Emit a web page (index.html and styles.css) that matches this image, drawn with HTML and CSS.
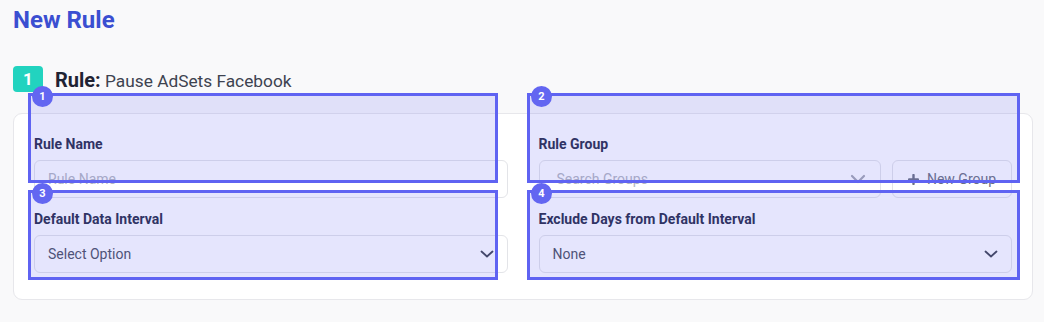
FILE: index.html
```html
<!DOCTYPE html>
<html lang="en">
<head>
<meta charset="utf-8">
<title>New Rule</title>
<link rel="stylesheet" href="styles.css">
</head>
<body>
<div class="page">
  <h1 class="title">New Rule</h1>
  <div class="step">
    <span class="step-num">1</span>
    <span class="step-title"><b>Rule:</b> Pause AdSets Facebook</span>
  </div>
  <div class="card">
    <div class="grid">
      <div class="field">
        <label class="label">Rule Name</label>
        <div class="input placeholder">Rule Name</div>
      </div>
      <div class="field">
        <label class="label">Rule Group</label>
        <div class="group-row">
          <div class="input placeholder search">
            <span>Search Groups</span>
            <svg class="chev light" width="16" height="10" viewBox="0 0 16 10"><path d="M2 2l6 6 6-6" fill="none" stroke="currentColor" stroke-width="2.2" stroke-linecap="round" stroke-linejoin="round"/></svg>
          </div>
          <div class="btn">
            <svg width="11" height="11" viewBox="0 0 11 11"><path d="M5.5 1v9M1 5.5h9" stroke="currentColor" stroke-width="2.4" stroke-linecap="round"/></svg>
            <span>New Group</span>
          </div>
        </div>
      </div>
      <div class="field">
        <label class="label">Default Data Interval</label>
        <div class="input select">
          <span>Select Option</span>
          <svg class="chev" width="14" height="8" viewBox="0 0 14 8"><path d="M1.5 1.5l5.5 5 5.5-5" fill="none" stroke="currentColor" stroke-width="1.8" stroke-linecap="round" stroke-linejoin="round"/></svg>
        </div>
      </div>
      <div class="field">
        <label class="label">Exclude Days from Default Interval</label>
        <div class="input select">
          <span>None</span>
          <svg class="chev" width="14" height="8" viewBox="0 0 14 8"><path d="M1.5 1.5l5.5 5 5.5-5" fill="none" stroke="currentColor" stroke-width="1.8" stroke-linecap="round" stroke-linejoin="round"/></svg>
        </div>
      </div>
    </div>
  </div>

  <div class="annot a1"><span class="badge">1</span></div>
  <div class="annot a2"><span class="badge">2</span></div>
  <div class="annot a3"><span class="badge">3</span></div>
  <div class="annot a4"><span class="badge">4</span></div>
</div>
</body>
</html>
```

FILE: styles.css
```css
* { box-sizing: border-box; }
html, body { margin: 0; padding: 0; }
body {
  background: #f9f9fa;
  font-family: Roboto, "Liberation Sans", sans-serif;
  color: #262a48;
}
.page {
  position: relative;
  padding: 6px 11px 0 13px;
  height: 322px;
}
.title {
  margin: 0;
  font-size: 24px;
  line-height: 28px;
  font-weight: 700;
  color: #3b4fd1;
}
.step {
  display: flex;
  align-items: center;
  gap: 12px;
  margin-top: 32px;
  height: 26px;
}
.step-num {
  width: 30px;
  height: 26px;
  border-radius: 4px;
  background: #22d3bf;
  color: #fff;
  font-weight: 700;
  font-size: 17px;
  display: flex;
  align-items: center;
  justify-content: center;
}
.step-title {
  font-size: 17.3px;
  color: #3e4350;
  padding-top: 2px;
}
.step-title b {
  font-size: 20px;
  color: #1f2333;
}
.card {
  margin-top: 21px;
  background: #fff;
  border: 1px solid #e7e7eb;
  border-radius: 9px;
  padding: 20px 20px 26px 20px;
}
.grid {
  display: grid;
  grid-template-columns: 1fr 1fr;
  column-gap: 31px;
  row-gap: 11px;
}
.field { display: flex; flex-direction: column; }
.label {
  font-size: 14px;
  font-weight: 700;
  line-height: 20px;
  color: #262a48;
  margin-bottom: 6px;
}
.input {
  height: 38px;
  border: 1px solid #e3e4e8;
  border-radius: 6px;
  background: #fff;
  padding: 0 13px;
  display: flex;
  align-items: center;
  font-size: 14px;
  color: #4b5060;
}
.placeholder { color: #b3b6c0; }
.select, .search { justify-content: space-between; }
.search { padding: 0 14px 0 17px; flex: 1; }
.chev { color: #3d4250; flex: none; }
.chev.light { color: #a4a7b1; }
.group-row { display: flex; gap: 11px; }
.btn {
  width: 120px;
  height: 38px;
  border: 1px solid #e3e4e8;
  border-radius: 6px;
  display: flex;
  align-items: center;
  justify-content: center;
  gap: 8px;
  font-size: 14px;
  color: #6b7080;
}
.annot {
  position: absolute;
  border: 3px solid #5f63f2;
  background: rgba(99, 102, 241, 0.17);
}
.a1 { left: 28px; top: 93px; width: 470px; height: 90px; }
.a2 { left: 527px; top: 93px; width: 493px; height: 90px; }
.a3 { left: 28px; top: 190px; width: 470px; height: 90px; }
.a4 { left: 527px; top: 190px; width: 493px; height: 90px; }
.badge {
  position: absolute;
  left: 1px;
  top: -10px;
  width: 21px;
  height: 21px;
  border-radius: 50%;
  background: #6366f1;
  color: #fff;
  font-size: 11px;
  font-weight: 700;
  display: flex;
  align-items: center;
  justify-content: center;
}
```
